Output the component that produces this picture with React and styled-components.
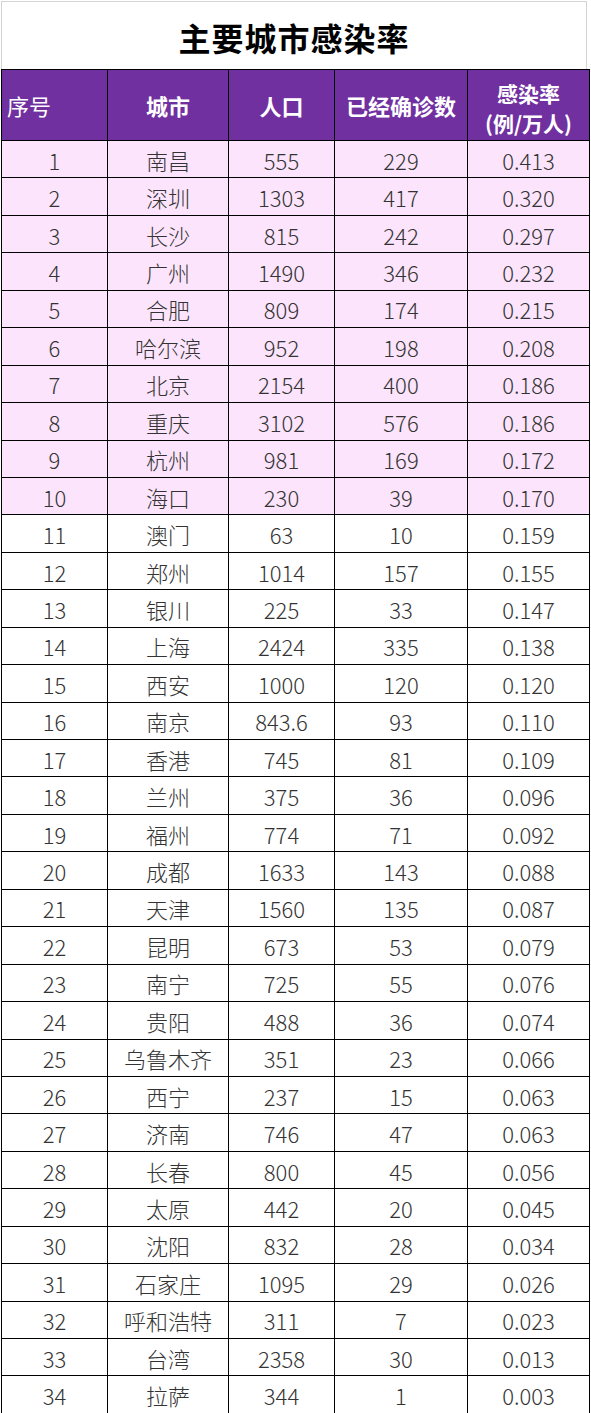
import React from 'react'
import styled, { createGlobalStyle } from 'styled-components'

const GlobalStyle = createGlobalStyle`
  html, body {
    margin: 0;
    padding: 0;
    background: #fff;
  }
  body {
    font-family: "Noto Sans CJK SC", "DejaVu Sans", sans-serif;
  }
`

const rows = [
  ['南昌', '555', '229', '0.413'],
  ['深圳', '1303', '417', '0.320'],
  ['长沙', '815', '242', '0.297'],
  ['广州', '1490', '346', '0.232'],
  ['合肥', '809', '174', '0.215'],
  ['哈尔滨', '952', '198', '0.208'],
  ['北京', '2154', '400', '0.186'],
  ['重庆', '3102', '576', '0.186'],
  ['杭州', '981', '169', '0.172'],
  ['海口', '230', '39', '0.170'],
  ['澳门', '63', '10', '0.159'],
  ['郑州', '1014', '157', '0.155'],
  ['银川', '225', '33', '0.147'],
  ['上海', '2424', '335', '0.138'],
  ['西安', '1000', '120', '0.120'],
  ['南京', '843.6', '93', '0.110'],
  ['香港', '745', '81', '0.109'],
  ['兰州', '375', '36', '0.096'],
  ['福州', '774', '71', '0.092'],
  ['成都', '1633', '143', '0.088'],
  ['天津', '1560', '135', '0.087'],
  ['昆明', '673', '53', '0.079'],
  ['南宁', '725', '55', '0.076'],
  ['贵阳', '488', '36', '0.074'],
  ['乌鲁木齐', '351', '23', '0.066'],
  ['西宁', '237', '15', '0.063'],
  ['济南', '746', '47', '0.063'],
  ['长春', '800', '45', '0.056'],
  ['太原', '442', '20', '0.045'],
  ['沈阳', '832', '28', '0.034'],
  ['石家庄', '1095', '29', '0.026'],
  ['呼和浩特', '311', '7', '0.023'],
  ['台湾', '2358', '30', '0.013'],
  ['拉萨', '344', '1', '0.003'],
]

const Sheet = styled.div`
  margin: 1px 0 0 1px;
  width: 589px;
`

const TitleBar = styled.div`
  box-sizing: border-box;
  width: 586px;
  height: 68px;
  border: 1px solid #d4d4d4;
  border-bottom: none;
  display: flex;
  align-items: center;
  justify-content: center;
  font-size: 32px;
  font-weight: 700;
  letter-spacing: 1px;
  color: #000;
  padding-top: 2px;
`

const Table = styled.div`
  border-top: 1px solid #000;
  border-left: 1px solid #000;
`

const Row = styled.div`
  box-sizing: border-box;
  display: grid;
  grid-template-columns: 106px 121px 106px 133px 122px;
  height: ${(p) => (p.$head ? '71px' : '37.44px')};
  border-bottom: 1px solid #000;
  background: ${(p) => (p.$head ? '#7030a0' : p.$top ? '#fce5fc' : '#fff')};
`

const Cell = styled.div`
  border-right: 1px solid #000;
  display: flex;
  align-items: center;
  justify-content: center;
  font-size: 22px;
  font-weight: 300;
  color: #333;
  padding-top: 1px;
  white-space: nowrap;
`

const HeadCell = styled(Cell)`
  color: #fff;
  font-weight: ${(p) => (p.$plain ? 400 : 700)};
  justify-content: ${(p) => (p.$plain ? 'flex-start' : 'center')};
  padding: 0 0 0 ${(p) => (p.$plain ? '5px' : '0')};
  text-align: center;
`

const TwoLines = styled.div`
  font-size: 21px;
  line-height: 30.5px;
  padding-top: 6px;
`

export default function App() {
  return (
    <>
      <GlobalStyle />
      <Sheet>
        <TitleBar>主要城市感染率</TitleBar>
        <Table>
          <Row $head>
            <HeadCell $plain>序号</HeadCell>
            <HeadCell>城市</HeadCell>
            <HeadCell>人口</HeadCell>
            <HeadCell>已经确诊数</HeadCell>
            <HeadCell>
              <TwoLines>
                感染率
                <br />
                (例/万人)
              </TwoLines>
            </HeadCell>
          </Row>
          {rows.map((r, i) => (
            <Row key={r[0]} $top={i < 10}>
              <Cell>{i + 1}</Cell>
              {r.map((v, j) => (
                <Cell key={j}>{v}</Cell>
              ))}
            </Row>
          ))}
        </Table>
      </Sheet>
    </>
  )
}
